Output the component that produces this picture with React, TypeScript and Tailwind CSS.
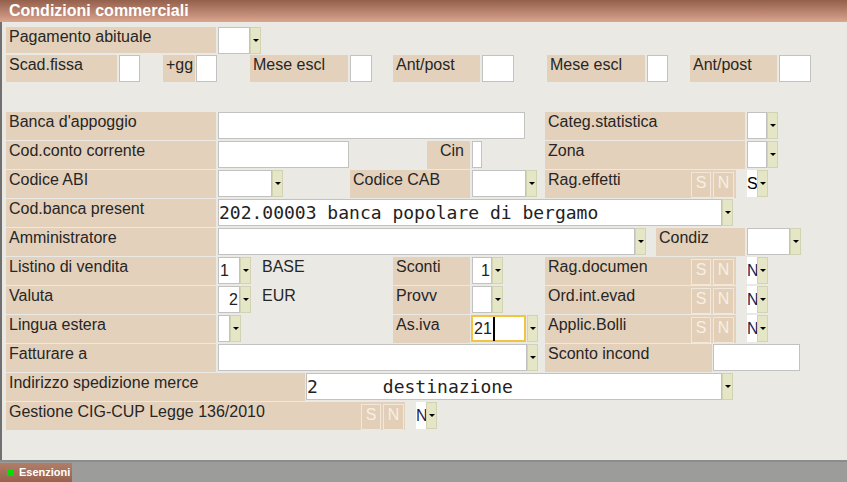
import React from "react";

type Box = { className?: string; children?: React.ReactNode };

const Label = ({ className = "", children }: Box) => (
  <div
    className={`h-full shrink-0 bg-[#e4d1bc] pl-[3px] pt-[1px] leading-[18px] text-[#262626] ${className}`}
  >
    {children}
  </div>
);

const Input = ({ className = "", children }: Box) => (
  <div
    className={`h-[27px] shrink-0 border border-[#c2c2c2] bg-white leading-[25px] text-[#222] ${className}`}
  >
    {children}
  </div>
);

const Dd = ({ className = "" }: { className?: string }) => (
  <div
    className={`flex h-[27px] w-[11px] shrink-0 items-center justify-center border border-[#d2d3b2] bg-[#e5e6c6] ${className}`}
  >
    <div className="h-0 w-0 border-x-[3px] border-t-[3px] border-x-transparent border-t-black" />
  </div>
);

const SN = () => (
  <div className="ml-auto flex gap-[2px] pt-[1px]">
    <div className="h-[26px] w-[20px] border border-[#f1e7da] bg-[#e3cfb7] text-center leading-[20px] text-[#f6efe6]">
      S
    </div>
    <div className="h-[26px] w-[21px] border border-[#f1e7da] bg-[#e3cfb7] text-center leading-[20px] text-[#f6efe6]">
      N
    </div>
  </div>
);

const Sel = ({ v, className = "" }: { v: string; className?: string }) => (
  <div className={`flex shrink-0 ${className}`}>
    <div className="h-[27px] w-[10px] overflow-visible bg-white leading-[27px] text-[#1b2150]">
      {v}
    </div>
    <Dd className="w-[10px]" />
  </div>
);

const Row = ({ className = "", children }: Box) => (
  <div className={`flex h-[28px] mt-[1px] items-start pl-[4px] ${className}`}>
    {children}
  </div>
);

const mono = "font-['DejaVu_Sans_Mono',monospace] text-[18px] whitespace-pre";

export default function App() {
  return (
    <div className="flex h-[482px] w-[847px] flex-col overflow-hidden bg-[#ebe9e3] font-['Liberation_Sans',Arial,sans-serif] text-[16px]">
      <div className="h-[22px] shrink-0 bg-gradient-to-b from-[#93604c] to-[#dba58f] pl-[9px] text-[16px] font-bold leading-[22px] text-white">
        Condizioni commerciali
      </div>

      <div className="flex-1 border-l-2 border-[#707070]">
        {/* Pagamento */}
        <div className="mt-[5px] flex h-[26px] items-start pl-[4px]">
          <Label className="w-[210px]">Pagamento abituale</Label>
          <Input className="ml-[2px] h-[26px] w-[32px]" />
          <Dd className="h-[26px] w-[10px]" />
        </div>

        {/* Scadenze */}
        <div className="mt-[2px] flex h-[27px] items-start pl-[4px]">
          <Label className="w-[111px]">Scad.fissa</Label>
          <Input className="ml-[2px] w-[21px]" />
          <Label className="ml-[23px] w-[32px]">+gg</Label>
          <Input className="ml-[1px] w-[21px]" />
          <Label className="ml-[33px] w-[98px]">Mese escl</Label>
          <Input className="ml-[2px] w-[22px]" />
          <Label className="ml-[21px] w-[87px]">Ant/post</Label>
          <Input className="ml-[2px] w-[32px]" />
          <Label className="ml-[33px] w-[98px]">Mese escl</Label>
          <Input className="ml-[2px] w-[21px]" />
          <Label className="ml-[22px] w-[87px]">Ant/post</Label>
          <Input className="ml-[2px] w-[32px]" />
        </div>

        <Row className="mt-[30px]">
          <Label className="w-[210px]">Banca d'appoggio</Label>
          <Input className="ml-[2px] w-[307px]" />
          <Label className="ml-[20px] w-[200px]">Categ.statistica</Label>
          <Input className="ml-[2px] w-[20px]" />
          <Dd />
        </Row>

        <Row>
          <Label className="w-[210px]">Cod.conto corrente</Label>
          <Input className="ml-[2px] w-[131px]" />
          <Label className="ml-[78px] w-[43px] pl-[13px]">Cin</Label>
          <Input className="ml-[2px] w-[10px]" />
          <Label className="ml-[63px] w-[200px]">Zona</Label>
          <Input className="ml-[2px] w-[20px]" />
          <Dd />
        </Row>

        <Row>
          <Label className="w-[210px]">Codice ABI</Label>
          <Input className="ml-[2px] w-[54px]" />
          <Dd />
          <Label className="ml-[67px] w-[120px]">Codice CAB</Label>
          <Input className="ml-[2px] w-[54px]" />
          <Dd />
          <Label className="ml-[8px] flex w-[191px] pr-[2px]">
            <span>Rag.effetti</span>
            <SN />
          </Label>
          <Sel v="S" className="ml-[11px] [&>div:first-child]:text-black" />
        </Row>

        <Row>
          <Label className="w-[210px]">Cod.banca present</Label>
          <Input className={`ml-[2px] w-[504px] ${mono}`}>202.00003 banca popolare di bergamo</Input>
          <Dd />
        </Row>

        <Row>
          <Label className="w-[210px]">Amministratore</Label>
          <Input className="ml-[2px] w-[417px]" />
          <Dd />
          <Label className="ml-[10px] w-[89px]">Condiz</Label>
          <Input className="ml-[2px] w-[43px]" />
          <Dd />
        </Row>

        <Row>
          <Label className="w-[210px]">Listino di vendita</Label>
          <Input className="ml-[2px] w-[22px] pl-[1px]">1</Input>
          <Dd />
          <div className="ml-[11px] w-[131px] shrink-0 pt-[1px] leading-[18px] text-[#262626]">BASE</div>
          <Label className="w-[77px]">Sconti</Label>
          <Input className="ml-[2px] w-[20px] pr-[1px] text-right">1</Input>
          <Dd />
          <Label className="ml-[42px] flex w-[191px] pr-[2px]">
            <span>Rag.documen</span>
            <SN />
          </Label>
          <Sel v="N" className="ml-[11px]" />
        </Row>

        <Row>
          <Label className="w-[210px]">Valuta</Label>
          <Input className="ml-[2px] w-[22px] pr-[1px] text-right">2</Input>
          <Dd />
          <div className="ml-[11px] w-[131px] shrink-0 pt-[1px] leading-[18px] text-[#262626]">EUR</div>
          <Label className="w-[77px]">Provv</Label>
          <Input className="ml-[2px] w-[20px]" />
          <Dd />
          <Label className="ml-[42px] flex w-[191px] pr-[2px]">
            <span>Ord.int.evad</span>
            <SN />
          </Label>
          <Sel v="N" className="ml-[11px]" />
        </Row>

        <Row>
          <Label className="w-[210px]">Lingua estera</Label>
          <Input className="ml-[2px] w-[12px]" />
          <Dd />
          <Label className="ml-[152px] w-[77px]">As.iva</Label>
          <div className="ml-[1px] flex h-[27px] w-[55px] shrink-0 items-center border-2 border-[#f2c443] bg-white pl-[1px] text-[#222]">
            <span className="leading-[22px]">21</span>
            <span className="ml-[1px] h-[24px] w-[2px] bg-black" />
          </div>
          <Dd className="ml-[1px]" />
          <Label className="ml-[7px] flex w-[191px] pr-[2px]">
            <span>Applic.Bolli</span>
            <SN />
          </Label>
          <Sel v="N" className="ml-[11px]" />
        </Row>

        <Row>
          <Label className="w-[210px]">Fatturare a</Label>
          <Input className="ml-[2px] w-[309px]" />
          <Dd />
          <Label className="ml-[7px] w-[167px]">Sconto incond</Label>
          <Input className="ml-[1px] w-[87px]" />
        </Row>

        <Row>
          <Label className="w-[299px]">Indirizzo spedizione merce</Label>
          <Input className={`ml-[1px] w-[416px] ${mono}`}>{"2      destinazione"}</Input>
          <Dd />
        </Row>

        <Row>
          <Label className="flex w-[399px] pr-[1px]">
            <span>Gestione CIG-CUP Legge 136/2010</span>
            <SN />
          </Label>
          <Sel v="N" className="ml-[11px]" />
        </Row>
      </div>

      <div className="relative h-[22px] shrink-0 border-t-2 border-[#8c8c8a] bg-[#9c9c9a]">
        <div className="absolute bottom-0 left-0 flex h-[19px] w-[72px] items-center bg-gradient-to-b from-[#b07e68] to-[#97614e] pl-[7px]">
          <div className="h-[7px] w-[7px] bg-[#00e000]" />
          <span className="ml-[5px] text-[11px] font-bold leading-none text-white">Esenzioni</span>
        </div>
      </div>
    </div>
  );
}
